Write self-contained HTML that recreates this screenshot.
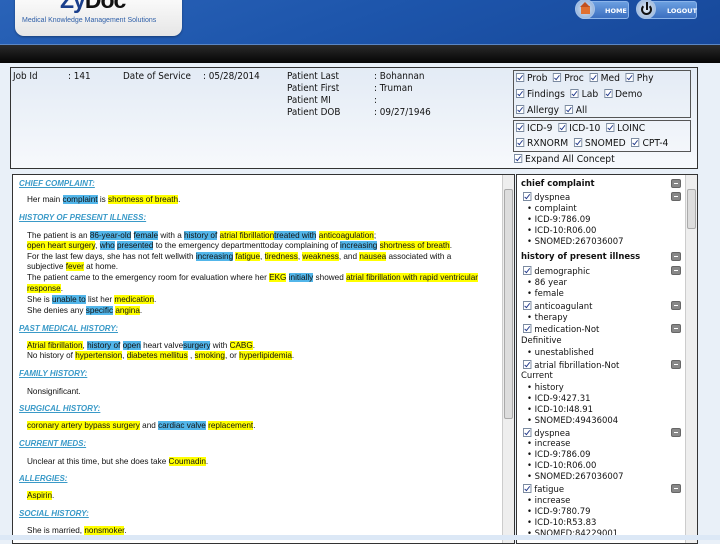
<!DOCTYPE html>
<html><head><meta charset="utf-8"><style>
*{margin:0;padding:0;box-sizing:border-box}
body{width:720px;height:540px;overflow:hidden;background:#e9f0f8;font-family:"Liberation Sans",Arial,sans-serif;position:relative}
.hdr{position:absolute;left:0;top:0;width:720px;height:45px;background:linear-gradient(160deg,#2a63b8 0%,#1d55ab 50%,#17489a 100%)}
.bar{position:absolute;left:0;top:44px;width:720px;height:19px;background:linear-gradient(#2a2a2a,#050505);border-top:1px solid #5b86c4}
.logo{position:absolute;left:15px;top:-10px;width:167px;height:46px;background:linear-gradient(#fff,#e6e6e6);border-radius:0 0 9px 9px;box-shadow:0 1px 2px #0005}
.logo .z{position:absolute;left:45px;top:-3px;font:bold 23px "Liberation Sans",sans-serif;color:#1a3f8c;letter-spacing:-1px}
.logo .z b{color:#111}
.logo .s{position:absolute;left:7px;top:27px;font-size:7px;color:#3060a8;white-space:nowrap}
.btn{position:absolute;top:1px;height:18px;border-radius:3px;background:linear-gradient(#6a9ee0,#3b6fc0);color:#fff;font:bold 6.5px "DejaVu Sans",sans-serif;line-height:18px;padding-left:24px;border:1px solid #8bb4ea}
.circ{position:absolute;top:-1px;width:20px;height:20px;border-radius:50%;background:radial-gradient(#dde8f5,#7fa4d4);border:1px solid #a7c3e9}
.info{position:absolute;left:10px;top:67px;width:688px;height:102px;background:linear-gradient(#e3ebf5,#f7f9fc);border:1px solid #333}
.t{position:absolute;font-size:9.5px;color:#111;white-space:nowrap;font-family:"DejaVu Sans",sans-serif;transform:scaleX(.93);transform-origin:left}
.c{position:absolute;font-size:10px;color:#111;white-space:nowrap;font-family:"DejaVu Sans",sans-serif;transform:scaleX(.92);transform-origin:left;word-spacing:3px}
.cb{display:inline-block;width:9px;height:9px;border:1px solid #7a8aa0;background:#fff;vertical-align:-1px;margin-right:3px;position:relative}
.cb:after{content:"";position:absolute;left:2px;top:0;width:2px;height:5px;border:solid #223a8c;border-width:0 1px 1px 0;transform:rotate(40deg)}
.box{position:absolute;border:1px solid #555}
.pane{position:absolute;top:174px;background:#fff;border:1px solid #333;overflow:hidden}
.sb{position:absolute;top:0;width:12px;bottom:0;background:#eee;border-left:1px solid #ccc}
.l{position:absolute;left:14px;font-size:8.2px;white-space:nowrap;color:#111;line-height:10px}
.h{position:absolute;left:6px;font:italic bold 8px "Liberation Sans",sans-serif;color:#3a9ac8;text-decoration:underline;white-space:nowrap}
.y{background:#ffff00}.b{background:#52b6ea}
.r{position:absolute;font:9px "DejaVu Sans",sans-serif;color:#111;white-space:nowrap;line-height:11px;transform:scaleX(.94);transform-origin:left}
.rb{font-weight:bold}
.m{position:absolute;left:154px;width:10px;height:9px;border-radius:2px;background:#888;border:1px solid #666}
.m:after{content:"";position:absolute;left:2px;top:3px;width:4px;height:1px;background:#fff}
</style></head><body>
<div class="hdr"></div>
<div class="logo"><div class="z">Zy<b>Doc</b></div><div class="s">Medical Knowledge Management Solutions</div></div>
<div class="btn" style="left:580px;width:49px">HOME</div><div class="circ" style="left:575px"><div style="position:absolute;left:5px;top:6px;width:9px;height:8px;background:#e07030"></div><div style="position:absolute;left:4px;top:2px;border:5.5px solid transparent;border-bottom-color:#c05020;border-top:0"></div></div>
<div class="btn" style="left:642px;width:55px">LOGOUT</div><div class="circ" style="left:636px;background:radial-gradient(#e4ecf6,#8aaad4)"><div style="position:absolute;left:4px;top:4px;width:11px;height:11px;border-radius:50%;border:2px solid #111;border-top-color:transparent"></div><div style="position:absolute;left:8.5px;top:2px;width:2px;height:8px;background:#111"></div></div>
<div class="bar"></div>

<div class="info">
<div class="t" style="left:2px;top:3px">Job Id</div><div class="t" style="left:57px;top:3px">: 141</div>
<div class="t" style="left:112px;top:3px">Date of Service</div><div class="t" style="left:192px;top:3px">: 05/28/2014</div>
<div class="t" style="left:276px;top:3px">Patient Last</div><div class="t" style="left:363px;top:3px">: Bohannan</div>
<div class="t" style="left:276px;top:15px">Patient First</div><div class="t" style="left:363px;top:15px">: Truman</div>
<div class="t" style="left:276px;top:27px">Patient MI</div><div class="t" style="left:363px;top:27px">:</div>
<div class="t" style="left:276px;top:39px">Patient DOB</div><div class="t" style="left:363px;top:39px">: 09/27/1946</div>
<div class="box" style="left:502px;top:2px;width:178px;height:48px"></div>
<div class="box" style="left:502px;top:52px;width:178px;height:32px"></div>
<div class="c" style="left:505px;top:5px"><span class="cb"></span>Prob <span class="cb"></span>Proc <span class="cb"></span>Med <span class="cb"></span>Phy</div>
<div class="c" style="left:505px;top:21px"><span class="cb"></span>Findings <span class="cb"></span>Lab <span class="cb"></span>Demo</div>
<div class="c" style="left:505px;top:37px"><span class="cb"></span>Allergy <span class="cb"></span>All</div>
<div class="c" style="left:505px;top:55px"><span class="cb"></span>ICD-9 <span class="cb"></span>ICD-10 <span class="cb"></span>LOINC</div>
<div class="c" style="left:505px;top:70px"><span class="cb"></span>RXNORM <span class="cb"></span>SNOMED <span class="cb"></span>CPT-4</div>
<div class="c" style="left:503px;top:86px;word-spacing:0"><span class="cb"></span>Expand All Concept</div>
</div>

<div class="pane" style="left:12px;width:503px;height:370px">
<div class="sb" style="left:489px"><div style="position:absolute;left:1px;top:14px;width:9px;height:230px;background:#ddd;border:1px solid #aaa;border-radius:2px"></div></div>
<div class="h" style="top:4px">CHIEF COMPLAINT:</div>
<div class="l" style="top:20px">Her main <span class="b">complaint</span> is <span class="y">shortness of breath</span>.</div>
<div class="h" style="top:38px">HISTORY OF PRESENT ILLNESS:</div>
<div class="l" style="top:56px">The patient is an <span class="b">86-year-old</span> <span class="b">female</span> with a <span class="b">history of</span> <span class="y">atrial fibrillation</span><span class="b">treated with</span> <span class="y">anticoagulation</span>;</div>
<div class="l" style="top:66px"><span class="y">open heart surgery</span>, <span class="b">who</span> <span class="b">presented</span> to the emergency departmenttoday complaining of <span class="b">increasing</span> <span class="y">shortness of breath</span>.</div>
<div class="l" style="top:77px">For the last few days, she has not felt wellwith <span class="b">increasing</span> <span class="y">fatigue</span>, <span class="y">tiredness</span>, <span class="y">weakness</span>, and <span class="y">nausea</span> associated with a</div>
<div class="l" style="top:87px">subjective <span class="y">fever</span> at home.</div>
<div class="l" style="top:98px">The patient came to the emergency room for evaluation where her <span class="y">EKG</span> <span class="b">initially</span> showed <span class="y">atrial fibrillation with rapid ventricular</span></div>
<div class="l" style="top:109px"><span class="y">response</span>.</div>
<div class="l" style="top:120px">She is <span class="b">unable to</span> list her <span class="y">medication</span>.</div>
<div class="l" style="top:131px">She denies any <span class="b">specific</span> <span class="y">angina</span>.</div>
<div class="h" style="top:149px">PAST MEDICAL HISTORY:</div>
<div class="l" style="top:166px"><span class="y">Atrial fibrillation</span>, <span class="b">history of</span> <span class="b">open</span> heart valve<span class="b">surgery</span> with <span class="y">CABG</span>.</div>
<div class="l" style="top:176px">No history of <span class="y">hypertension</span>, <span class="y">diabetes mellitus</span> , <span class="y">smoking</span>, or <span class="y">hyperlipidemia</span>.</div>
<div class="h" style="top:194px">FAMILY HISTORY:</div>
<div class="l" style="top:212px">Nonsignificant.</div>
<div class="h" style="top:229px">SURGICAL HISTORY:</div>
<div class="l" style="top:246px"><span class="y">coronary artery bypass surgery</span> and <span class="b">cardiac valve</span> <span class="y">replacement</span>.</div>
<div class="h" style="top:264px">CURRENT MEDS:</div>
<div class="l" style="top:282px">Unclear at this time, but she does take <span class="y">Coumadin</span>.</div>
<div class="h" style="top:299px">ALLERGIES:</div>
<div class="l" style="top:316px"><span class="y">Aspirin</span>.</div>
<div class="h" style="top:334px">SOCIAL HISTORY:</div>
<div class="l" style="top:351px">She is married, <span class="y">nonsmoker</span>.</div>
</div>

<div class="pane" style="left:516px;width:182px;height:370px">
<div class="sb" style="left:168px"><div style="position:absolute;left:1px;top:14px;width:9px;height:40px;background:#ddd;border:1px solid #aaa;border-radius:2px"></div></div>
<div class="r rb" style="left:4px;top:4px">chief complaint</div><div class="m" style="top:4px"></div>
<div class="r" style="left:6px;top:17px"><span class="cb"></span>dyspnea</div><div class="m" style="top:17px"></div>
<div class="r" style="left:10px;top:29px">• complaint</div>
<div class="r" style="left:10px;top:40px">• ICD-9:786.09</div>
<div class="r" style="left:10px;top:51px">• ICD-10:R06.00</div>
<div class="r" style="left:10px;top:62px">• SNOMED:267036007</div>
<div class="r rb" style="left:4px;top:77px">history of present illness</div><div class="m" style="top:77px"></div>
<div class="r" style="left:6px;top:91px"><span class="cb"></span>demographic</div><div class="m" style="top:91px"></div>
<div class="r" style="left:10px;top:103px">• 86 year</div>
<div class="r" style="left:10px;top:114px">• female</div>
<div class="r" style="left:6px;top:126px"><span class="cb"></span>anticoagulant</div><div class="m" style="top:126px"></div>
<div class="r" style="left:10px;top:138px">• therapy</div>
<div class="r" style="left:6px;top:149px"><span class="cb"></span>medication-Not</div><div class="m" style="top:149px"></div>
<div class="r" style="left:4px;top:161px">Definitive</div>
<div class="r" style="left:10px;top:173px">• unestablished</div>
<div class="r" style="left:6px;top:185px"><span class="cb"></span>atrial fibrillation-Not</div><div class="m" style="top:185px"></div>
<div class="r" style="left:4px;top:196px">Current</div>
<div class="r" style="left:10px;top:208px">• history</div>
<div class="r" style="left:10px;top:219px">• ICD-9:427.31</div>
<div class="r" style="left:10px;top:230px">• ICD-10:I48.91</div>
<div class="r" style="left:10px;top:241px">• SNOMED:49436004</div>
<div class="r" style="left:6px;top:253px"><span class="cb"></span>dyspnea</div><div class="m" style="top:253px"></div>
<div class="r" style="left:10px;top:264px">• increase</div>
<div class="r" style="left:10px;top:275px">• ICD-9:786.09</div>
<div class="r" style="left:10px;top:286px">• ICD-10:R06.00</div>
<div class="r" style="left:10px;top:297px">• SNOMED:267036007</div>
<div class="r" style="left:6px;top:309px"><span class="cb"></span>fatigue</div><div class="m" style="top:309px"></div>
<div class="r" style="left:10px;top:321px">• increase</div>
<div class="r" style="left:10px;top:332px">• ICD-9:780.79</div>
<div class="r" style="left:10px;top:343px">• ICD-10:R53.83</div>
<div class="r" style="left:10px;top:354px">• SNOMED:84229001</div>
</div>
<div style="position:absolute;left:0;top:535px;width:720px;height:5px;background:#dce8f6"></div>
</body></html>
